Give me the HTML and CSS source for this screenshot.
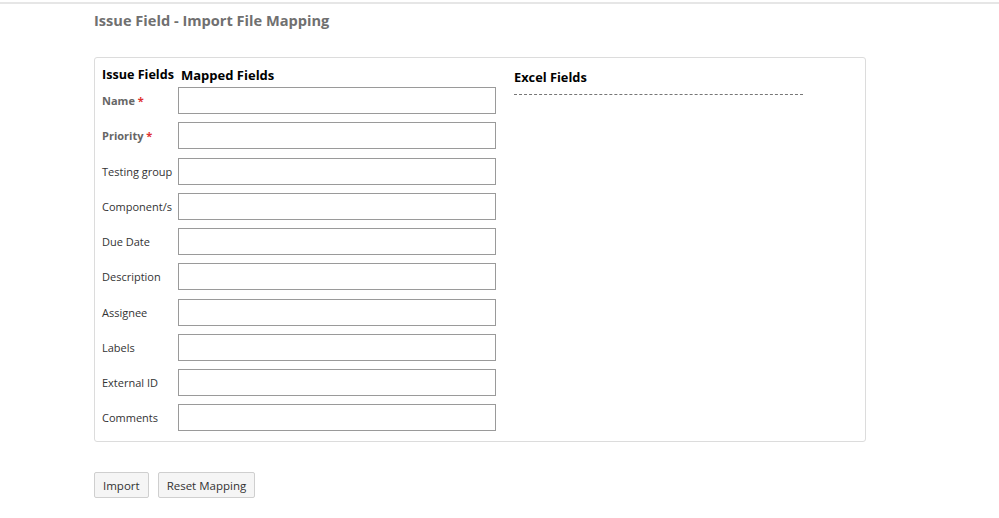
FILE: index.html
```html
<!DOCTYPE html>
<html>
<head>
<meta charset="utf-8">
<link rel="stylesheet" href="styles.css">
</head>
<body>
<div class="topline"></div>
<div class="page">
  <h1 class="title">Issue Field - Import File Mapping</h1>
  <div class="panel">
    <div class="fields">
      <div class="hdr">Issue Fields</div>
      <div class="hdr hdr-mapped">Mapped Fields</div>
      <label class="lbl req">Name <span class="star">*</span></label><input class="inp" type="text">
      <label class="lbl req">Priority <span class="star">*</span></label><input class="inp" type="text">
      <label class="lbl">Testing group</label><input class="inp" type="text">
      <label class="lbl">Component/s</label><input class="inp" type="text">
      <label class="lbl">Due Date</label><input class="inp" type="text">
      <label class="lbl">Description</label><input class="inp" type="text">
      <label class="lbl">Assignee</label><input class="inp" type="text">
      <label class="lbl">Labels</label><input class="inp" type="text">
      <label class="lbl">External ID</label><input class="inp" type="text">
      <label class="lbl">Comments</label><input class="inp" type="text">
    </div>
    <div class="excel">
      <div class="excel-hdr">Excel Fields</div>
      <div class="excel-list"></div>
    </div>
  </div>
  <div class="actions">
    <button class="btn" type="button">Import</button>
    <button class="btn" type="button">Reset Mapping</button>
  </div>
</div>
</body>
</html>
```
FILE: styles.css
```css
html, body {
  margin: 0;
  padding: 0;
  background: #fff;
  font-family: "Open Sans", "Noto Sans", sans-serif;
  color: #333;
}
.topline {
  height: 2px;
  margin-top: 2px;
  background: #e6e6e6;
}
.page {
  padding-left: 94px;
}
.title {
  margin: 5px 0 0 0;
  font-size: 14.6px;
  line-height: 22px;
  font-weight: 700;
  color: #707070;
}
.panel {
  margin-top: 26px;
  width: 770px;
  height: 383px;
  border: 1px solid #dcdcdc;
  border-radius: 3px;
  display: flex;
  gap: 18px;
}
.fields {
  display: grid;
  grid-template-columns: 76px 318px;
  row-gap: 8.22px;
  padding: 8px 0 0 7px;
  align-content: start;
  align-items: center;
}
.hdr {
  font-size: 12.6px;
  font-weight: 700;
  color: #000;
  line-height: 18px;
  margin-bottom: -5px;
}
.hdr-mapped {
  padding-left: 3px;
  font-size: 13px;
}
.lbl {
  font-size: 11px;
  color: #333;
  white-space: nowrap;
}
.lbl.req {
  font-weight: 700;
  color: #666;
}
.star {
  color: #e03030;
}
.inp {
  box-sizing: border-box;
  width: 318px;
  height: 27px;
  margin: 0;
  border: 1px solid #9a9a9a;
  border-radius: 0;
  padding: 2px 5px;
  font: inherit;
}
.excel {
  padding-top: 10px;
  width: 289px;
}
.excel-hdr {
  font-size: 12.8px;
  font-weight: 700;
  color: #000;
  line-height: 18px;
}
.excel-list {
  margin-top: 8px;
  border-top: 1px dashed #777;
}
.actions {
  margin-top: 30px;
  display: flex;
  gap: 9px;
}
.btn {
  height: 26px;
  padding: 0 8px;
  font-family: inherit;
  font-size: 11.5px;
  color: #333;
  background: #f5f5f5;
  border: 1px solid #cfcfcf;
  border-radius: 2px;
}
```
